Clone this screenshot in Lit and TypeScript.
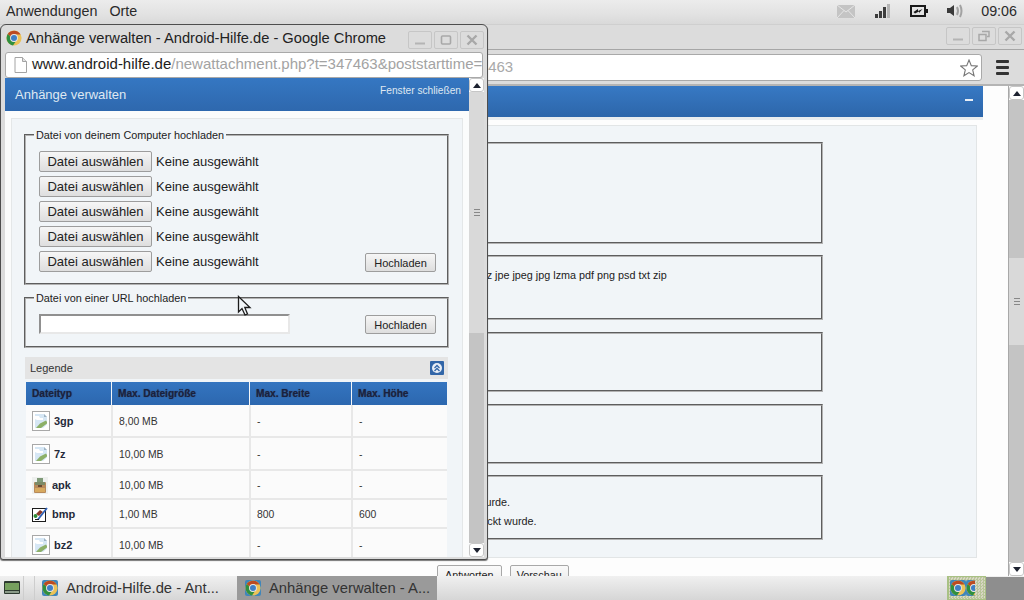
import { LitElement, html, css, svg } from "lit";
import { customElement } from "lit/decorators.js";

const chrome = (square = false) => html`<svg class="ico16" viewBox="0 0 16 16">
  ${square ? svg`<rect x="0" y="0" width="16" height="16" rx="2" fill="#3f86bb"/>` : ""}
  <circle cx="8" cy="8" r="7.6" fill="#ecc257"/>
  <path d="M1.7 4.1A7.6 7.6 0 0 1 14.6 4.4H8A3.8 3.8 0 0 0 4.5 6.7Z" fill="#bb4a22"/>
  <path d="M1.7 4.1A7.6 7.6 0 0 0 7 15.5L9.9 11.2A3.8 3.8 0 0 1 4.5 6.7Z" fill="#2f8f3f"/>
  <circle cx="8" cy="8" r="3.9" fill="#e6e6e6"/>
  <circle cx="8" cy="8" r="3" fill="#3f7fc6"/>
</svg>`;

const fileImg = html`<svg class="ft" viewBox="0 0 18 20">
  <rect x=".5" y=".5" width="17" height="19" fill="#fff" stroke="#a8a8a8"/>
  <path d="M3 3H12L15 6V17H3Z" fill="#d6e7f5"/>
  <path d="M12 3V6H15Z" fill="#9fb4c4"/>
  <path d="M3 5h4l1 2h3v2H5L3 8Z" fill="#fff"/>
  <path d="M4 17L8 12.5L14 9.5L15 11V12.5L9 17Z" fill="#8cb068"/>
  <path d="M11 17L15 13.5V17Z" fill="#fff"/>
</svg>`;

const apk = html`<svg class="ft apk" viewBox="0 0 16 17">
  <rect width="16" height="17" fill="#eef0ee"/>
  <rect x="5" y="1" width="6" height="4" fill="#7f9a78"/>
  <rect x="2" y="5" width="12" height="11" rx="1" fill="#b8895a"/>
  <rect x="3" y="5" width="10" height="3" fill="#7c8a66"/>
  <rect x="3" y="11" width="10" height="4" fill="#d7a95f"/>
  <rect x="6" y="8" width="4" height="2" fill="#6a4a30"/>
</svg>`;

const bmp = html`<svg class="ft apk" viewBox="0 0 16 17">
  <rect x=".5" y="2.5" width="13" height="13" fill="#fff" stroke="#1c1c1c"/>
  <path d="M4 8L8 4L11 6L7 10Z" fill="#8a3a2a"/>
  <circle cx="3.5" cy="10" r="2" fill="#2f8a36"/>
  <path d="M6 13.5L15 2" stroke="#2f62b8" stroke-width="1.8"/>
  <path d="M3 13.5H7" stroke="#222"/>
</svg>`;

const rows = [
  { n: "3gp", s: "8,00 MB", w: "-", h: "-", i: fileImg, c: "tall" },
  { n: "7z", s: "10,00 MB", w: "-", h: "-", i: fileImg, c: "tall" },
  { n: "apk", s: "10,00 MB", w: "-", h: "-", i: apk, c: "low" },
  { n: "bmp", s: "1,00 MB", w: "800", h: "600", i: bmp, c: "low" },
  { n: "bz2", s: "10,00 MB", w: "-", h: "-", i: fileImg, c: "tall" },
];

const winBtns = (restore: boolean) => html`<div class="wbtns">
  <span class="wb"><svg viewBox="0 0 22 16"><path d="M6 11.5h10" stroke="#b4b4b4" stroke-width="2"/></svg></span>
  <span class="wb"><svg viewBox="0 0 22 16">${restore
    ? svg`<path d="M9 3.5h7v5h-2M6 6.5h7v6H6z" fill="none" stroke="#a8a8a8" stroke-width="1.5"/>`
    : svg`<rect x="6.5" y="4" width="9" height="8" rx="1" fill="none" stroke="#a8a8a8" stroke-width="1.6"/>`}</svg></span>
  <span class="wb"><svg viewBox="0 0 22 16"><path d="M6.5 3.5L15.5 12.5M15.5 3.5L6.5 12.5" stroke="#a8a8a8" stroke-width="2.4"/></svg></span>
</div>`;

const scrollbar = (cls: string) => html`<div class="sb ${cls}">
  <div class="sb-btn"><i class="tri up"></i></div>
  <div class="sb-track t1"></div>
  <div class="sb-thumb"><i class="grip"></i></div>
  <div class="sb-track t2"></div>
  <div class="sb-btn"><i class="tri down"></i></div>
</div>`;

@customElement("app-root")
export class AppRoot extends LitElement {
  static styles = css`
    :host { display: block; width: 1024px; height: 600px; font-family: "Liberation Sans", Arial, sans-serif; color: #1c1c1c; }
    * { box-sizing: border-box; }
    .root { position: relative; width: 1024px; height: 600px; overflow: hidden; display: grid; grid-template-rows: 24px 552px 24px; background: #dcdcdc; }
    .ico16 { width: 16px; height: 16px; display: block; flex: none; }

    .top { display: flex; align-items: center; background: linear-gradient(#ececec, #e2e2e2 60%, #d9d9d9); font-size: 14.3px; color: #2a2a2a; padding: 0 7px 2px 6px; }
    .top .m { margin-right: 12px; }
    .tray { margin-left: auto; display: flex; align-items: center; }
    .tray svg { display: block; flex: none; }
    .mail { width: 18px; height: 13px; margin-right: 20px; }
    .signal { width: 15px; height: 14px; margin-right: 20px; }
    .batt { width: 18px; height: 12px; margin-right: 19px; }
    .vol { width: 18px; height: 16px; margin-right: 16px; }

    .back { display: flex; flex-direction: column; min-height: 0; background: #dcdcdc; border-top: 1px solid #cfcfcf; }
    .b-title { height: 25px; display: flex; justify-content: flex-end; padding: 2px 2px 0 0; border-bottom: 1px solid #a6a6a6; flex: none; }
    .b-title .wbtns { gap: 2px; }
    .b-tool { height: 36px; display: flex; padding: 3px 14px 0 0; align-items: flex-start; border-bottom: 2px solid #b4b4b4; flex: none; }
    .b-omni { width: 982px; height: 27px; margin-top: 1px; background: #fff; border: 1px solid #a9a9a9; border-radius: 3px; display: flex; align-items: center; font-size: 15px; color: #a9a9a9; padding: 0 3px 0 113px; white-space: nowrap; overflow: hidden; }
    .b-omni .url { flex: 1; padding-bottom: 2px; }
    .star { width: 18px; height: 18px; flex: none; }
    .menu { width: 13px; margin: 7px 0 0 14px; display: flex; flex-direction: column; gap: 3px; flex: none; }
    .menu i { display: block; height: 3px; background: #333; border-radius: 1px; }

    .b-page { flex: 1; display: flex; min-height: 0; background: #fdfdfd; }
    .b-main { flex: 1; min-width: 0; overflow: hidden; }
    .b-box { width: 983px; }
    .b-bar { height: 31px; background: linear-gradient(#3779c4, #2d66aa); display: flex; justify-content: flex-end; padding: 13px 10px 0 0; }
    .b-bar i { display: block; width: 8px; height: 2px; background: #e8eef6; }
    .b-strip { height: 3px; background: #eaedef; }
    .b-panel { margin: 5px 6px 0 5px; height: 433px; background: #f1f5f8; border: 1px solid #e2e5e6; padding: 16px 153px 0 15px; display: flex; flex-direction: column; gap: 11px; }
    .bf { border: 2px groove #b2b2b2; font-size: 10.8px; color: #222; padding: 0; flex: none; }
    .bf1 { height: 102px; }
    .bf2 { height: 65px; padding-top: 12px; }
    .bf3, .bf4 { height: 60px; margin-top: 1px; }
    .bf5 { height: 65px; padding-top: 16px; line-height: 19px; }
    .types { padding-left: 343px; white-space: nowrap; }
    .note { padding-left: 247px; white-space: nowrap; }
    .note2 { padding-left: 175px; white-space: nowrap; }
    .b-actions { display: flex; gap: 8px; padding: 7px 0 0 437px; }
    .b-actions span { border: 1px solid #a8a8a8; border-radius: 2px; background: linear-gradient(#fafafa, #e6e6e6); font-size: 10.8px; height: 24px; line-height: 15px; padding: 2px 7px; }
    .b-actions span + span { padding: 2px 6px; }

    .sb { width: 16px; flex: none; display: flex; flex-direction: column; border-left: 1px solid #a8a8a8; }
    .sb-btn { height: 14px; background: #fff; flex: none; display: flex; align-items: center; justify-content: center; border: 1px solid #c6c6c6; border-radius: 3px; }
    .tri { width: 0; height: 0; border-left: 4px solid transparent; border-right: 4px solid transparent; }
    .up { border-bottom: 5px solid #1d2230; }
    .down { border-top: 5px solid #1d2230; }
    .sb-track { background: #c4c4c4; }
    .sb-thumb { background: #d9d9d9; display: flex; align-items: center; justify-content: center; flex: none; }
    .grip { width: 6px; height: 7px; display: block; border-top: 1px solid #888; border-bottom: 1px solid #888; background: linear-gradient(#888, #888) center / 100% 1px no-repeat; }
    .back-sb .t1 { height: 158px; flex: none; }
    .back-sb .sb-thumb { height: 87px; }
    .back-sb .t2 { flex: 1; }
    .pop-sb { border-left: none; width: 15px; }
    .pop-sb .t1 { display: none; }
    .pop-sb .sb-thumb { height: 241px; }
    .pop-sb .t2 { flex: 1; }

    .wbtns { display: flex; gap: 3px; }
    .wb { width: 24px; height: 18px; border: 1px solid #c6c6c6; border-radius: 2px; display: block; }
    .wb svg { display: block; width: 22px; height: 16px; }

    .bottom { display: flex; align-items: stretch; position: relative; background: linear-gradient(#f0f0f0, #e8e8e8 30%, #d6d6d6); font-size: 14.8px; color: #333; padding-left: 4px; }
    .desk { width: 16px; height: 14px; margin-top: 5px; flex: none; }
    .sep { width: 12px; margin: 0 0 0 3px; flex: none; border-left: 1px solid #cdcdcd; border-right: 1px solid #cdcdcd; }
    .task { width: 200px; flex: none; display: flex; align-items: center; gap: 8px; padding: 0 0 0 6px; white-space: nowrap; overflow: hidden; }
    .task.one { margin: 0 1px; }
    .task.on { background: #9a9a9a; padding-left: 8px; }
    .btray { margin-left: auto; display: flex; flex: none; }
    .tr-icons { width: 39px; border: 1px solid #a9c184; border-width: 1px 1px 1px 2px; display: flex; align-items: center; overflow: hidden; padding-left: 1px; background: repeating-conic-gradient(#b9c69a 0 25%, #d8d6c4 0 50%) 0 0 / 3px 3px; }
    .tr-icons .cut { width: 9px; overflow: hidden; flex: none; }
    .tr-gray { width: 38px; background: #8e8e8e; margin-top: 1px; }

    .popup { position: absolute; left: 0; top: 24px; width: 488px; height: 536px; background: #dcdcdc; border: 1px solid #4e4e4e; border-radius: 6px 6px 3px 3px; box-shadow: 0 1px 1px #777; display: flex; flex-direction: column; padding: 0 3px 2px 4px; }
    .p-title { height: 27px; flex: none; display: flex; align-items: center; padding: 0 0 1px 1px; font-size: 14.7px; color: #222; }
    .p-title .t { margin-left: 4px; white-space: nowrap; flex: 1; }
    .p-title .wbtns { margin: 3px 0 0 0; gap: 2px; }
    .p-omni { height: 26px; flex: none; background: #fff; border: 1px solid #a9a9a9; border-radius: 3px; display: flex; align-items: center; padding: 0 0 3px 8px; font-size: 15px; white-space: nowrap; overflow: hidden; margin: 0 1px 0 0; }
    .p-omni svg { width: 13px; height: 16px; flex: none; margin: 3px 5px 0 0; }
    .p-omni b { font-weight: normal; color: #1c1c1c; }
    .p-omni span { color: #a3a3a3; }
    .p-page { flex: 1; min-height: 0; display: flex; background: #fbfcfc; }
    .p-main { flex: 1; min-width: 0; overflow: hidden; }
    .p-bar { height: 33px; background: linear-gradient(#3577c2, #2e68ae); display: flex; justify-content: space-between; color: #dfe8f2; font-size: 13px; padding: 9px 8px 0 10px; }
    .p-bar small { font-size: 10.2px; margin-top: -2px; }
    .p-panel { margin: 7px 6px 0 6px; background: #f1f5f8; border: 1px solid #e4e7e8; padding: 10px 13px 0 12px; height: 500px; }
    fieldset { border: 2px groove #b2b2b2; margin: 0; min-width: 0; font-size: 11px; padding: 0; }
    legend { margin-left: -5px; padding: 0 2px; font-size: 10.85px; line-height: 12px; color: #222; }
    .f1 { height: 156px; padding: 10px 11px 0 13px; }
    .f2 { height: 56px; margin-top: 7px; padding: 10px 11px 0 13px; display: flex; justify-content: space-between; align-items: flex-start; }
    .frow { height: 25px; display: flex; align-items: flex-start; font-size: 13px; }
    .frow span { margin: 3px 0 0 4px; }
    .bn { font: inherit; color: #222; border: 1px solid #9d9d9d; border-radius: 2px; background: linear-gradient(#f6f6f6, #dedede); }
    .file { width: 113px; height: 21px; padding: 0; font-size: 13px; flex: none; }
    .up-b { width: 71px; height: 19px; font-size: 11px; padding: 0; flex: none; }
    .frow .up-b { margin: 2px 0 0 auto; }
    .urlin { width: 251px; height: 20px; background: #fff; border: 2px solid; border-color: #909090 #e8e8e8 #e8e8e8 #909090; display: block; }
    .f2 .up-b { margin-top: 1px; }
    .leg { height: 22px; margin: 9px 1px 0; background: #e4e4e4; display: flex; align-items: center; justify-content: space-between; padding: 0 4px 0 5px; font-size: 11px; color: #333; }
    .leg svg { width: 14px; height: 14px; display: block; }
    table { border-collapse: separate; border-spacing: 0; width: 421px; margin: 3px 0 0 2px; table-layout: fixed; font-size: 10.4px; color: #333; }
    th { height: 23px; background: linear-gradient(#3475c0, #2c67af); text-align: left; padding: 0 0 1px 6px; color: #17223f; font-weight: bold; font-size: 10.1px; border-left: 1px solid #f4f6f8; text-shadow: 0 0 1px #3a3a55; }
    th:first-child { border-left: none; }
    td { background: #fbfbfb; border-left: 2px solid #e8e8e8; border-bottom: 2px solid #e8e8e8; padding: 1px 0 0 6px; }
    td:first-child { border-left: none; }
    tr.tall td { height: 33px; }
    tr.low td { height: 29px; }
    .ty { display: flex; align-items: center; gap: 4px; font-weight: bold; font-size: 11px; color: #252a3a; }
    .ft { width: 18px; height: 20px; display: block; flex: none; }
    .ft.apk { width: 16px; height: 17px; }
    .cursor { position: absolute; left: 237px; top: 295px; width: 15px; height: 22px; }
  `;

  render() {
    const formRow = (last: boolean) => html`<div class="frow">
      <button class="bn file">Datei auswählen</button><span>Keine ausgewählt</span>
      ${last ? html`<button class="bn up-b">Hochladen</button>` : ""}
    </div>`;
    return html`<div class="root">
      <header class="top">
        <span class="m">Anwendungen</span><span>Orte</span>
        <div class="tray">
          <svg class="mail" viewBox="0 0 18 13"><rect width="18" height="13" fill="#c4c4c4"/><path d="M0 0L9 7L18 0M0 13L7 5.5M18 13L11 5.5" fill="none" stroke="#e6e6e6"/></svg>
          <svg class="signal" viewBox="0 0 15 14"><rect x="0" y="10" width="3" height="4" fill="#3c3c3c"/><rect x="4" y="7" width="3" height="7" fill="#3c3c3c"/><rect x="8" y="3" width="3" height="11" fill="#3c3c3c"/><rect x="12" y="0" width="3" height="14" fill="#b4b4b4"/></svg>
          <svg class="batt" viewBox="0 0 18 12"><rect x="1" y="1" width="14" height="10" fill="none" stroke="#1a1a1a" stroke-width="2"/><rect x="15" y="4" width="3" height="4" fill="#1a1a1a"/><path d="M3.5 7L8 4V6L12.5 4L9 8V6.5L5 8.5Z" fill="#1a1a1a"/></svg>
          <svg class="vol" viewBox="0 0 18 16"><path d="M0 5H3L7 2V13L3 10H0Z" fill="#3a3a3a"/><path d="M10 4Q12 8 10 12M13 2Q16 8 13 14" fill="none" stroke="#a2a2a2" stroke-width="2"/></svg>
          <span>09:06</span>
        </div>
      </header>

      <section class="back">
        <div class="b-title">${winBtns(true)}</div>
        <div class="b-tool">
          <div class="b-omni"><span class="url">www.android-hilfe.de/newreply.php?do=postreply&amp;t=347463</span>
            <svg class="star" viewBox="0 0 18 18"><path d="M9 1L11.3 6.6L17.3 7L12.7 10.9L14.1 16.8L9 13.6L3.9 16.8L5.3 10.9L.7 7L6.7 6.6Z" fill="#fff" stroke="#777" stroke-width="1.1"/></svg>
          </div>
          <div class="menu"><i></i><i></i><i></i></div>
        </div>
        <div class="b-page">
          <div class="b-main">
            <div class="b-box">
              <div class="b-bar"><i></i></div>
              <div class="b-strip"></div>
              <div class="b-panel">
                <div class="bf bf1"></div>
                <div class="bf bf2"><div class="types">3gp 7z apk bmp bz2 gif gz jpe jpeg jpg lzma pdf png psd txt zip</div></div>
                <div class="bf bf3"></div>
                <div class="bf bf4"></div>
                <div class="bf bf5"><div class="note">Benachrichtigen, wenn ein Beitrag verfasst wurde.</div><div class="note2">Benachrichtigen, wenn ein Anhang hochgeladen und verschickt wurde.</div></div>
              </div>
              <div class="b-actions"><span>Antworten</span><span>Vorschau</span></div>
            </div>
          </div>
          ${scrollbar("back-sb")}
        </div>
      </section>

      <footer class="bottom">
        <svg class="desk" viewBox="0 0 16 14"><rect width="16" height="13" rx="1" fill="#2e3a30"/><rect x="1" y="2" width="14" height="7" fill="#76a05e"/><rect x="1" y="10" width="14" height="2" fill="#8a9a88"/></svg>
        <span class="sep"></span>
        <div class="task one">${chrome(true)}<span>Android-Hilfe.de - Ant...</span></div>
        <div class="task on">${chrome(true)}<span>Anhänge verwalten - A...</span></div>
        <div class="btray">
          <div class="tr-icons">${chrome(true)}<div class="cut">${chrome(true)}</div></div>
          <div class="tr-gray"></div>
        </div>
      </footer>

      <article class="popup">
        <div class="p-title">${chrome()}<span class="t">Anhänge verwalten - Android-Hilfe.de - Google Chrome</span>${winBtns(false)}</div>
        <div class="p-omni">
          <svg viewBox="0 0 13 16"><path d="M1 .5H8.5L12.5 4.5V15.5H1Z" fill="#fff" stroke="#a4a4a4"/><path d="M8.5 .5V4.5H12.5" fill="#e2e2e2" stroke="#a4a4a4"/></svg>
          <b>www.android-hilfe.de</b><span>/newattachment.php?t=347463&amp;poststarttime=</span>
        </div>
        <div class="p-page">
          <div class="p-main">
            <div class="p-bar"><span>Anhänge verwalten</span><small>Fenster schließen</small></div>
            <div class="p-panel">
              <fieldset class="f1"><legend>Datei von deinem Computer hochladen</legend>
                ${[0, 1, 2, 3, 4].map((i) => formRow(i === 4))}
              </fieldset>
              <fieldset class="f2"><legend>Datei von einer URL hochladen</legend>
                <span class="urlin"></span><button class="bn up-b">Hochladen</button>
              </fieldset>
              <div class="leg"><span>Legende</span>
                <svg viewBox="0 0 14 14"><rect width="14" height="14" rx="1" fill="#3266a8"/><circle cx="7" cy="7" r="5" fill="#e8eef6"/><path d="M4.5 7L7 4.5L9.5 7M4.5 10L7 7.5L9.5 10" fill="none" stroke="#3266a8" stroke-width="1.3"/></svg>
              </div>
              <table>
                <colgroup><col width="85"/><col width="138"/><col width="102"/><col width="96"/></colgroup>
                <thead><tr><th>Dateityp</th><th>Max. Dateigröße</th><th>Max. Breite</th><th>Max. Höhe</th></tr></thead>
                <tbody>${rows.map((r) => html`<tr class=${r.c}>
                  <td><div class="ty">${r.i}<span>${r.n}</span></div></td>
                  <td>${r.s}</td><td>${r.w}</td><td>${r.h}</td>
                </tr>`)}</tbody>
              </table>
            </div>
          </div>
          ${scrollbar("pop-sb")}
        </div>
      </article>

      <svg class="cursor" viewBox="0 0 15 22"><path d="M1.5 1.5V17L5 13.5L8 20L10.5 19L7.8 12.5H13Z" fill="#f1f5f8" stroke="#1c1c1c" stroke-width="1.3"/></svg>
    </div>`;
  }
}
